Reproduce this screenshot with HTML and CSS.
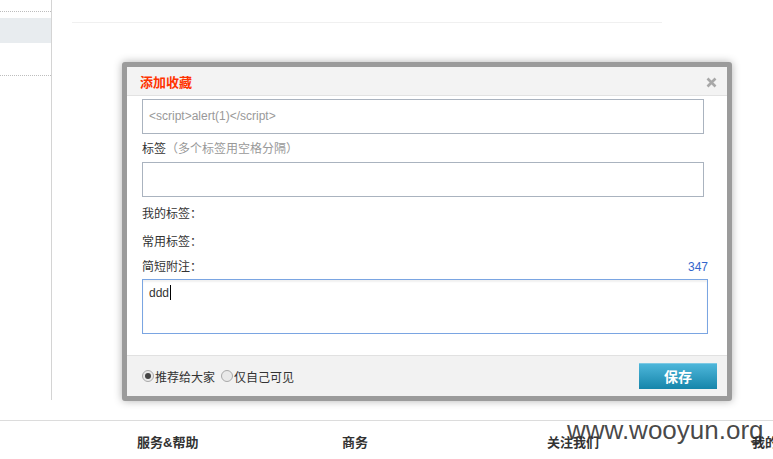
FILE: index.html
```html
<!DOCTYPE html>
<html lang="zh-CN">
  <head>
    <meta charset="UTF-8" />
    <title>添加收藏</title>
    <link rel="stylesheet" href="styles.css">
  </head>
  <body>
    <div class="page">
      <ul class="side">
        <li class="side-top"></li>
        <li class="side-now"></li>
        <li class="side-next"></li>
      </ul>
      <div class="main">
        <div class="main-top"></div>
      </div>
    </div>

    <div class="footer">
      <h3 class="foot-col">服务&amp;帮助</h3>
      <h3 class="foot-col">商务</h3>
      <h3 class="foot-col">关注我们</h3>
      <h3 class="foot-col">我的</h3>
    </div>

    <!-- 弹出层 -->
    <div class="dialog">
      <div class="dialog-title">
        <span class="title-text">添加收藏</span>
        <a href="#" class="close">
          <svg width="11" height="11" viewBox="0 0 11 11">
            <path d="M1.5 1.5 L9.5 9.5 M9.5 1.5 L1.5 9.5" stroke="#a8a8a8" stroke-width="2.6" stroke-linecap="butt" fill="none"/>
          </svg>
        </a>
      </div>
      <div class="dialog-body">
        <div class="field field-url">&lt;script&gt;alert(1)&lt;/script&gt;</div>
        <div class="label">标签<span class="hint">（多个标签用空格分隔）</span></div>
        <div class="field"></div>
        <div class="label row-first">我的标签：</div>
        <div class="label">常用标签：</div>
        <div class="label row-note">
          <span>简短附注：</span>
          <span class="count">347</span>
        </div>
        <div class="note">ddd<span class="caret"></span></div>
      </div>
      <div class="dialog-foot">
        <div class="radios">
          <label class="radio"><span class="dot checked"></span>推荐给大家</label>
          <label class="radio"><span class="dot"></span>仅自己可见</label>
        </div>
        <a href="#" class="btn-save">保存</a>
      </div>
    </div>

    <div class="mark">www.wooyun.org</div>
  </body>
</html>
```

FILE: styles.css
```css
* {
  margin: 0;
  padding: 0;
  list-style: none;
  box-sizing: border-box;
}
body {
  font-family: "Liberation Sans", "Noto Sans CJK SC", sans-serif;
  font-size: 12px;
  color: #333;
  background-color: #fff;
  width: 773px;
  height: 459px;
  overflow: hidden;
  position: relative;
}
a {
  text-decoration: none;
}

/* 页面背景 */
.page {
  display: flex;
  height: 400px;
}
.side {
  width: 52px;
  border-right: 1px solid #d4d4d4;
}
.side-top {
  height: 12px;
  border-bottom: 1px dotted #bdbdbd;
}
.side-now {
  margin-top: 6px;
  height: 25px;
  background-color: #e8ecef;
}
.side-next {
  height: 33px;
  border-bottom: 1px dotted #bdbdbd;
}
.main {
  flex: 1;
}
.main-top {
  margin-left: 20px;
  width: 590px;
  height: 23px;
  border-bottom: 1px solid #f0f0f0;
}

.footer {
  margin-top: 20px;
  border-top: 1px solid #dcdcdc;
  display: flex;
  padding-left: 137px;
}
.foot-col {
  width: 205px;
  flex-shrink: 0;
  padding-top: 13px;
  font-size: 13px;
  line-height: 18px;
  font-weight: 700;
  color: #333;
}

/* 添加收藏 弹出层 */
.dialog {
  position: absolute;
  left: 122px;
  top: 62px;
  width: 610px;
  height: 339px;
  border: 5px solid #9b9b9b;
  border-radius: 3px;
  background-color: #fff;
  box-shadow: 0 0 8px rgba(0, 0, 0, .3);
  display: flex;
  flex-direction: column;
}
.dialog-title {
  height: 29px;
  background-color: #f3f3f3;
  border-bottom: 1px solid #e2e2e2;
  display: flex;
  align-items: center;
  justify-content: space-between;
  padding: 0 10px 0 13px;
}
.title-text {
  color: #ff3300;
  font-size: 13px;
  font-weight: 700;
}
.close {
  display: flex;
  margin-top: 2px;
}

.dialog-body {
  flex: 1;
  padding: 3px 19px 0 15px;
}
.field {
  width: 562px;
  height: 35px;
  border: 1px solid #aab3bf;
}
.field-url {
  padding-left: 6px;
  line-height: 33px;
  color: #999;
  font-size: 12px;
}
.label {
  height: 28px;
  padding-top: 3px;
  line-height: 24px;
}
.hint {
  color: #999;
}
.row-first {
  margin-top: 2px;
}
.row-note {
  height: 24px;
  padding-top: 0;
  display: flex;
  justify-content: space-between;
}
.count {
  color: #3366cc;
}
.note {
  width: 566px;
  height: 55px;
  border: 1px solid #7aa5e2;
  box-shadow: inset 0 2px 2px rgba(0, 0, 0, .06);
  padding: 5px 6px;
  line-height: 16px;
  font-size: 12px;
  color: #333;
}
.caret {
  display: inline-block;
  width: 1px;
  height: 15px;
  background-color: #000;
  vertical-align: -3px;
  margin-left: 1px;
}

.dialog-foot {
  height: 41px;
  background-color: #f2f2f2;
  border-top: 1px solid #e1e1e1;
  display: flex;
  align-items: center;
  justify-content: space-between;
  padding: 0 10px 0 15px;
}
.radios {
  display: flex;
  gap: 6px;
}
.radio {
  display: flex;
  align-items: center;
  font-size: 12px;
  color: #333;
}
.dot {
  width: 12px;
  height: 12px;
  border: 1px solid #a9a9a9;
  border-radius: 50%;
  background-color: #e9e9e9;
  margin-right: 1px;
  display: flex;
  align-items: center;
  justify-content: center;
}
.dot.checked::after {
  content: "";
  width: 6px;
  height: 6px;
  border-radius: 50%;
  background-color: #444;
}
.btn-save {
  width: 78px;
  height: 26px;
  line-height: 26px;
  text-align: center;
  color: #fff;
  font-size: 14px;
  font-weight: 700;
  background: linear-gradient(#4db6da, #1685aa);
  border-top: 1px solid #7cc9e4;
}

/* 水印 */
.mark {
  position: absolute;
  left: 567px;
  top: 415px;
  font-family: "Liberation Sans", sans-serif;
  font-size: 26px;
  line-height: 30px;
  white-space: nowrap;
  color: rgba(40, 40, 40, .85);
}
```
